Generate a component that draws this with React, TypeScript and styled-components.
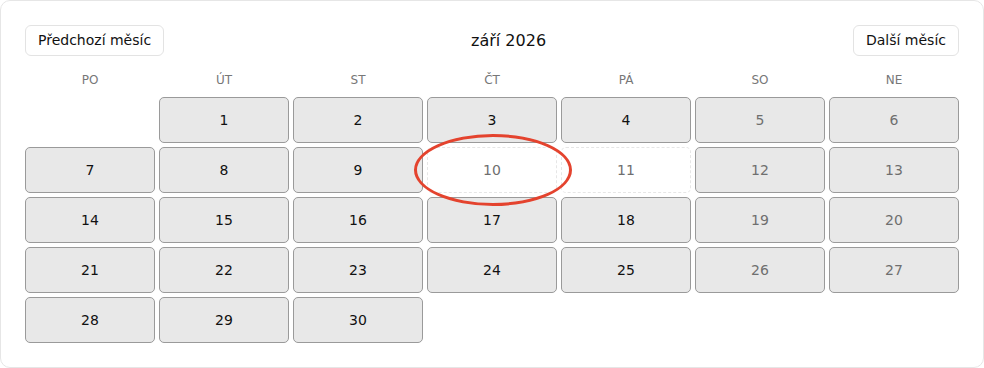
import React from "react";
import styled, { createGlobalStyle } from "styled-components";

const Global = createGlobalStyle`
  html, body { margin: 0; padding: 0; background: #ffffff; }
  body { font-family: "DejaVu Sans", "Liberation Sans", sans-serif; }
  * { box-sizing: border-box; }
`;

const Card = styled.div`
  width: 984px;
  height: 368px;
  border: 1px solid #e6e6e6;
  border-radius: 10px;
  background: #fff;
  padding: 24px;
`;

const Header = styled.div`
  display: flex;
  align-items: center;
  justify-content: space-between;
  height: 31px;
  margin-bottom: 16px;
`;

const NavButton = styled.button`
  font-family: "DejaVu Sans", sans-serif;
  font-size: 14px;
  line-height: 17px;
  color: #111;
  background: #fff;
  border: 1px solid #e3e3e3;
  border-radius: 6px;
  padding: 6px 12px;
  height: 31px;
`;

const Title = styled.div`
  font-size: 16px;
  color: #111;
  margin-top: -1px;
`;

const WeekRow = styled.div`
  display: grid;
  grid-template-columns: repeat(7, 1fr);
  gap: 4px;
  height: 17px;
  margin-bottom: 8px;
`;

const WeekLabel = styled.div`
  font-size: 12px;
  line-height: 17px;
  color: #777;
  text-align: center;
  text-transform: uppercase;
`;

const Grid = styled.div`
  display: grid;
  grid-template-columns: repeat(7, 1fr);
  grid-auto-rows: 46px;
  gap: 4px;
`;

const Day = styled.div<{ $weekend?: boolean; $off?: boolean }>`
  position: relative;
  display: flex;
  align-items: center;
  justify-content: center;
  font-size: 14px;
  border-radius: 5px;
  background: ${(p) => (p.$off ? "#ffffff" : "#e8e8e8")};
  border: 1px ${(p) => (p.$off ? "dashed #e6e6e6" : "solid #9a9a9a")};
  color: ${(p) => (p.$off || p.$weekend ? "#6f6f6f" : "#111")};
`;

const Empty = styled.div``;

const Circle = styled.div`
  position: absolute;
  z-index: 5;
  left: -14px;
  top: -14px;
  width: 158px;
  height: 72px;
  border: 3px solid #e4432e;
  border-radius: 50%;
  pointer-events: none;
`;

const labels = ["Po", "Út", "St", "Čt", "Pá", "So", "Ne"];

export default function App() {
  const cells: React.ReactNode[] = [<Empty key="e" />];
  for (let d = 1; d <= 30; d++) {
    const col = d % 7; // Sept 1 2026 is Tuesday (col 1)
    const weekend = col === 5 || col === 6;
    const off = d === 10 || d === 11;
    cells.push(
      <Day key={d} $weekend={weekend} $off={off}>
        {d}
        {d === 10 && <Circle />}
      </Day>
    );
  }
  return (
    <>
      <Global />
      <Card>
        <Header>
          <NavButton>Předchozí měsíc</NavButton>
          <Title>září 2026</Title>
          <NavButton>Další měsíc</NavButton>
        </Header>
        <WeekRow>
          {labels.map((l) => (
            <WeekLabel key={l}>{l}</WeekLabel>
          ))}
        </WeekRow>
        <Grid>{cells}</Grid>
      </Card>
    </>
  );
}
